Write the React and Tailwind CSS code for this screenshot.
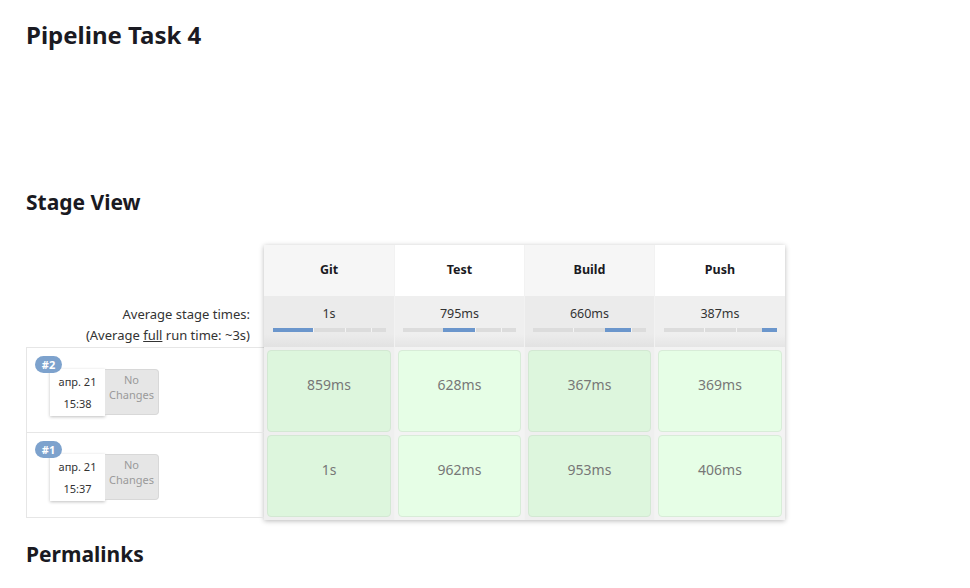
import React from "react";

const stages = [
  { name: "Git", avg: "1s", fill: [0, 40], dark: true },
  { name: "Test", avg: "795ms", fill: [40, 72], dark: false },
  { name: "Build", avg: "660ms", fill: [72, 98], dark: true },
  { name: "Push", avg: "387ms", fill: [98, 113], dark: false },
];

const runs = [
  { id: "#2", date: "апр. 21", time: "15:38", cells: ["859ms", "628ms", "367ms", "369ms"] },
  { id: "#1", date: "апр. 21", time: "15:37", cells: ["1s", "962ms", "953ms", "406ms"] },
];

function Bar({ fill }) {
  return (
    <div className="relative h-[4px] w-[113px] bg-[#dcdcdc]">
      <div className="absolute left-[40px] top-0 h-full w-[1px] bg-[#f4f4f4]" />
      <div className="absolute left-[72px] top-0 h-full w-[1px] bg-[#f4f4f4]" />
      <div className="absolute left-[98px] top-0 h-full w-[1px] bg-[#f4f4f4]" />
      <div
        className="absolute top-0 h-full bg-[#6b96cc]"
        style={{ left: `${fill[0]}px`, width: `${fill[1] - fill[0]}px` }}
      />
    </div>
  );
}

function RunLabel({ run }) {
  return (
    <div className="relative h-[85px] border-b border-[#e6e6e6] pl-[23px] pt-[21px]">
      <div className="absolute left-[8px] top-[8px] z-10 flex h-[17px] w-[27px] items-center justify-center rounded-full bg-[#7da2cd] text-[11px] font-bold leading-none text-white">
        {run.id}
      </div>
      <div className="flex">
        <div className="flex h-[47px] w-[55px] flex-col items-center justify-center gap-[11px] bg-white text-[11px] leading-none text-[#333] shadow-[0_1px_3px_rgba(0,0,0,0.25)]">
          <span>{run.date}</span>
          <span>{run.time}</span>
        </div>
        <div className="flex h-[46px] w-[54px] flex-col items-center justify-start rounded-r-[4px] border border-l-0 border-[#d8d8d8] bg-[#e6e6e6] pt-[2px] text-[11px] leading-[15px] text-[#9a9a9a]">
          <span>No</span>
          <span>Changes</span>
        </div>
      </div>
    </div>
  );
}

export default function App() {
  return (
    <div
      className="min-h-[588px] bg-white px-[26px] pt-[19px] text-[#1a1a22]"
      style={{ fontFamily: '"Noto Sans", "Open Sans", sans-serif' }}
    >
      <h1 className="text-[24px] font-bold leading-[32px]">Pipeline Task 4</h1>
      <h2 className="mt-[137px] text-[21px] font-bold leading-[28px]">Stage View</h2>

      <div className="mt-[29px] flex">
        <div className="w-[238px]">
          <div className="h-[51px]" />
          <div className="flex h-[51px] flex-col items-end justify-start pr-[14px] pt-[8px] text-[13px] leading-[21px] text-[#333]">
            <span>Average stage times:</span>
            <span>
              (Average <span className="underline">full</span> run time: ~3s)
            </span>
          </div>
          <div className="border-l border-t border-[#e6e6e6]">
            {runs.map((r) => (
              <RunLabel key={r.id} run={r} />
            ))}
          </div>
        </div>

        <div className="grid h-[275px] grid-cols-[130px_130px_130px_131px] shadow-[0_1px_5px_rgba(0,0,0,0.28)]">
          {stages.map((s, i) => (
            <div
              key={s.name}
              className={`flex flex-col ${i > 0 ? "border-l border-[#f2f2f2]" : ""}`}
            >
              <div
                className={`flex h-[51px] items-center justify-center text-[12.5px] font-bold ${
                  s.dark ? "bg-[#f6f6f6]" : "bg-white"
                }`}
              >
                {s.name}
              </div>
              <div
                className={`flex h-[51px] flex-col items-center pt-[9px] ${
                  s.dark
                    ? "bg-[linear-gradient(#ebebeb_0%,#ebebeb_75%,#e2e2e2_100%)]"
                    : "bg-[linear-gradient(#efefef_0%,#efefef_75%,#e5e5e5_100%)]"
                }`}
              >
                <span className="text-[12.5px] leading-[17px] text-[#333]">{s.avg}</span>
                <div className="mt-[6px]">
                  <Bar fill={s.fill} />
                </div>
              </div>
              <div className={`flex flex-1 flex-col gap-[3px] p-[3px] ${s.dark ? "bg-[#efefef]" : "bg-[#f3f3f3]"}`}>
                {runs.map((r) => (
                  <div
                    key={r.id}
                    className={`flex h-[82px] items-center justify-center rounded-[4px] border text-[14px] text-[#777] ${
                      s.dark
                        ? "border-[#d3e8d3] bg-[#ddf6dd]"
                        : "border-[#d8ecd8] bg-[#e6fee6]"
                    }`}
                  >
                    <span className="-mt-[14px]">{r.cells[i]}</span>
                  </div>
                ))}
              </div>
            </div>
          ))}
        </div>
      </div>

      <h2 className="mt-[20px] text-[21px] font-bold leading-[28px]">Permalinks</h2>
    </div>
  );
}
